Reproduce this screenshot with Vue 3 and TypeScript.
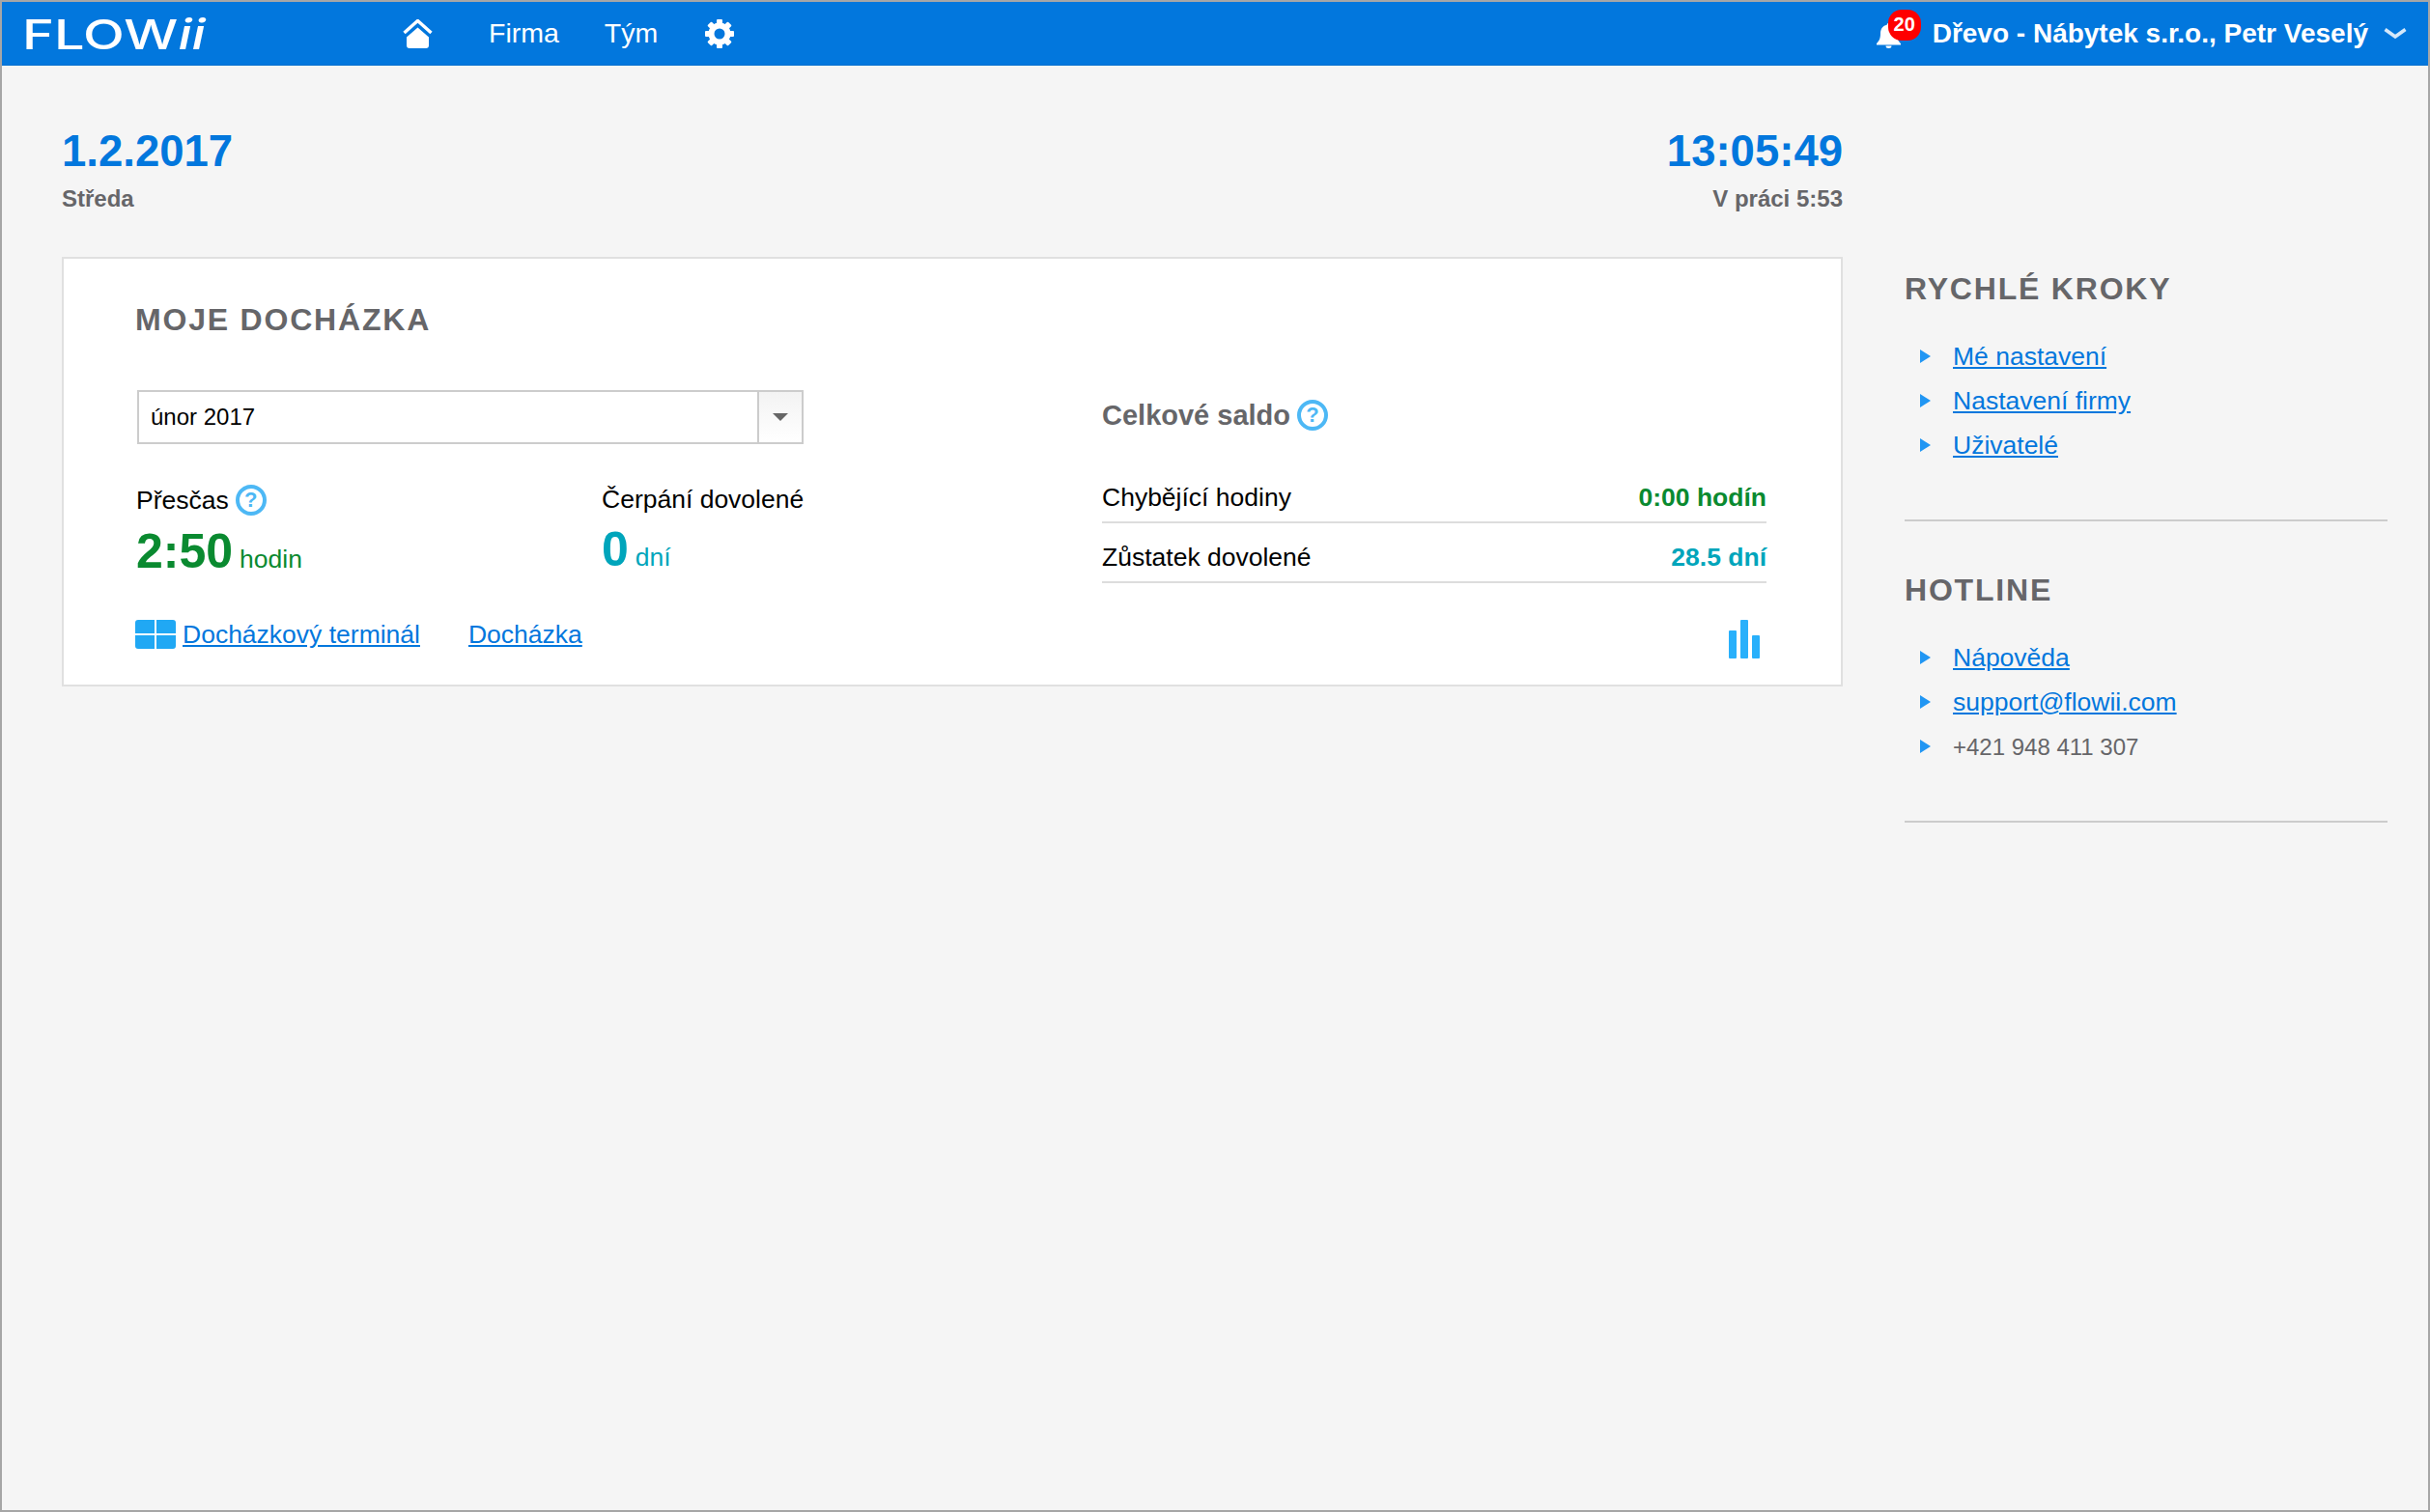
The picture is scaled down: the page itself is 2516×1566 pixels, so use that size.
<template>
  <div class="page">
    <header class="topbar">
      <div class="logo">FLOW<em>ii</em></div>
      <nav class="nav">
        <svg class="home-icon" viewBox="0 0 31 30" aria-label="Domů">
          <path d="M1.5 14 15.5 1.5 29.5 14" fill="none" stroke="#fff" stroke-width="3.4" />
          <path d="M15.5 8.5 27 18.5V27a3 3 0 0 1-3 3H7a3 3 0 0 1-3-3v-8.500z" fill="#fff" />
        </svg>
        <a class="nav-link">Firma</a>
        <a class="nav-link">Tým</a>
        <svg class="gear-icon" viewBox="-15 -15 30 30" aria-label="Nastavení">
          <circle r="8.500" fill="none" stroke="#fff" stroke-width="6" />
          <rect
            v-for="angle in gearTeeth"
            :key="angle"
            x="-3"
            y="-15"
            width="6"
            height="6"
            rx="1"
            fill="#fff"
            :transform="`rotate(${angle})`"
          />
        </svg>
      </nav>
      <div class="user">
        <div class="bell">
          <svg viewBox="0 0 25 26">
            <path d="M12.500 0c1 0 1.700.7 1.800 1.700C18.600 2.500 21 6 21 10.500c0 5 1 7.500 4 10.500v1.500H0V21c3-3 4-5.500 4-10.500C4 6 6.400 2.500 10.700 1.700 10.800.7 11.500 0 12.500 0zM9.500 23.500h6a3 2.500 0 0 1-6 0z" fill="#fff" />
          </svg>
          <span class="badge">20</span>
        </div>
        <span class="user-name">Dřevo - Nábytek s.r.o., Petr Veselý</span>
        <svg class="user-arrow" viewBox="0 0 24 11">
          <path d="M1.500 1.500 12 9 22.500 1.500" fill="none" stroke="#d5e8fa" stroke-width="3.600" />
        </svg>
      </div>
    </header>

    <main class="main">
      <div class="content">
        <div class="date-row">
          <div>
            <div class="big-date">1.2.2017</div>
            <div class="sub-date">Středa</div>
          </div>
          <div class="date-right">
            <div class="big-date">13:05:49</div>
            <div class="sub-date">V práci 5:53</div>
          </div>
        </div>

        <section class="card">
          <h2 class="section-title">MOJE DOCHÁZKA</h2>
          <div class="card-grid">
            <div>
              <div class="month-select">
                <span class="month-value">únor 2017</span>
                <span class="month-btn"><i class="month-caret" /></span>
              </div>
              <div class="stats">
                <div>
                  <div class="stat-label">Přesčas <span class="help">?</span></div>
                  <div class="stat-value green"><b>2:50</b> <span>hodin</span></div>
                </div>
                <div>
                  <div class="stat-label">Čerpání dovolené</div>
                  <div class="stat-value teal"><b>0</b> <span>dní</span></div>
                </div>
              </div>
            </div>
            <div class="saldo">
              <div class="saldo-title">Celkové saldo <span class="help">?</span></div>
              <div class="saldo-rows">
                <div class="saldo-row">
                  <span>Chybějící hodiny</span>
                  <b class="green">0:00 hodín</b>
                </div>
                <div class="saldo-row">
                  <span>Zůstatek dovolené</span>
                  <b class="teal">28.5 dní</b>
                </div>
              </div>
            </div>
          </div>
          <div class="card-footer">
            <svg class="win-icon" viewBox="0 0 42 30">
              <path d="M3 0h17v14H0V3a3 3 0 0 1 3-3zM22 0h17a3 3 0 0 1 3 3v11H22zM0 16h20v14H3a3 3 0 0 1-3-3zM22 16h20v11a3 3 0 0 1-3 3H22z" fill="#20a8f4" />
            </svg>
            <a class="link terminal-link">Docházkový terminál</a>
            <a class="link">Docházka</a>
            <svg class="chart-icon" viewBox="0 0 32 40">
              <rect x="0" y="11" width="8" height="29" rx="1" />
              <rect x="12" y="0" width="8" height="40" rx="1" />
              <rect x="24" y="16" width="8" height="24" rx="1" />
            </svg>
          </div>
        </section>
      </div>

      <aside class="side">
        <div v-for="block in sideBlocks" :key="block.title" class="side-block">
          <h3 class="section-title">{{ block.title }}</h3>
          <ul class="side-list">
            <li v-for="item in block.items" :key="item.text">
              <a v-if="item.link" class="link">{{ item.text }}</a>
              <span v-else class="phone">{{ item.text }}</span>
            </li>
          </ul>
        </div>
      </aside>
    </main>
  </div>
</template>

<script setup lang="ts">
interface SideItem {
  text: string;
  link: boolean;
}

const gearTeeth: number[] = [0, 45, 90, 135, 180, 225, 270, 315];

const sideBlocks: { title: string; items: SideItem[] }[] = [
  {
    title: 'RYCHLÉ KROKY',
    items: [
      { text: 'Mé nastavení', link: true },
      { text: 'Nastavení firmy', link: true },
      { text: 'Uživatelé', link: true },
    ],
  },
  {
    title: 'HOTLINE',
    items: [
      { text: 'Nápověda', link: true },
      { text: 'support@flowii.com', link: true },
      { text: '+421 948 411 307', link: false },
    ],
  },
];
</script>

<style>
html,
body {
  margin: 0;
  background: #f5f5f5;
}
</style>

<style scoped>
.page {
  box-sizing: border-box;
  height: 1566px;
  border: 2px solid #a6a6a6;
  background: #f5f5f5;
  font-family: "Liberation Sans", Arial, sans-serif;
  font-size: 26.5px;
  color: #000;
  overflow: hidden;
}

.topbar {
  box-sizing: border-box;
  height: 66px;
  display: flex;
  align-items: center;
  padding: 0 22px;
  background: #0277dd;
  border-bottom: 1px solid #036fce;
  color: #fff;
}

.logo {
  width: 394px;
  margin-left: -1px;
  font-family: Inter, sans-serif;
  font-size: 43px;
  font-weight: 500;
  line-height: 46px;
  transform: scaleX(1.3);
  transform-origin: left center;
  white-space: nowrap;
}

.nav {
  display: flex;
  align-items: center;
  gap: 47px;
}

.home-icon {
  width: 31px;
  height: 30px;
  margin-right: 11px;
}

.nav-link {
  font-size: 28.5px;
}

.gear-icon {
  width: 30px;
  height: 30px;
  margin-left: 2px;
}

.user {
  margin-left: auto;
  display: flex;
  align-items: center;
}

.bell {
  position: relative;
  width: 25px;
  height: 26px;
  margin-right: 33px;
  top: 2px;
}

.bell svg {
  display: block;
  width: 25px;
  height: 26px;
}

.badge {
  position: absolute;
  left: 12px;
  top: -14px;
  width: 34px;
  height: 32px;
  border-radius: 14px;
  background: #f00;
  font-size: 20px;
  font-weight: 700;
  line-height: 30px;
  text-align: center;
}

.user-name {
  font-size: 28px;
  font-weight: 700;
  white-space: nowrap;
}

.user-arrow {
  width: 24px;
  height: 11px;
  margin-left: 16px;
}

.main {
  display: flex;
  gap: 64px;
  padding: 63px 42px 0 62px;
}

.content {
  width: 1844px;
  flex-shrink: 0;
}

.date-row {
  display: flex;
  justify-content: space-between;
}

.date-right {
  text-align: right;
}

.big-date {
  font-size: 45.5px;
  font-weight: 700;
  line-height: 52px;
  color: #0277dd;
}

.sub-date {
  margin-top: 8px;
  font-size: 24px;
  font-weight: 700;
  line-height: 30px;
  color: #666669;
}

.card {
  margin-top: 45px;
  padding: 43px 77px 27px 74px;
  background: #fff;
  border: 2px solid #e0e0e0;
}

.section-title {
  margin: 0;
  font-size: 32px;
  font-weight: 700;
  line-height: 40px;
  letter-spacing: 1.8px;
  color: #666669;
}

.card-grid {
  display: grid;
  grid-template-columns: 692px 1fr;
  column-gap: 309px;
  margin-top: 53px;
}

.month-select {
  box-sizing: border-box;
  height: 56px;
  margin-left: 2px;
  display: flex;
  align-items: center;
  border: 2px solid #ccc;
  background: #fff;
  font-size: 24px;
}

.month-value {
  flex: 1;
  padding-left: 12px;
}

.month-btn {
  box-sizing: border-box;
  width: 46px;
  height: 100%;
  display: flex;
  align-items: center;
  justify-content: center;
  border-left: 2px solid #ccc;
  background: linear-gradient(#f3f3f3, #fff);
}

.month-caret {
  width: 0;
  height: 0;
  border-left: 8px solid transparent;
  border-right: 8px solid transparent;
  border-top: 8px solid #666;
}

.stats {
  display: grid;
  grid-template-columns: 482px 1fr;
  margin-top: 42px;
  margin-left: 1px;
}

.stat-label {
  display: flex;
  align-items: center;
  gap: 7px;
  line-height: 30px;
  white-space: nowrap;
}

.help {
  box-sizing: border-box;
  flex-shrink: 0;
  width: 32px;
  height: 32px;
  border: 4px solid #4db8f5;
  border-radius: 50%;
  font-size: 22px;
  font-weight: 700;
  line-height: 24px;
  text-align: center;
  color: #4db8f5;
}

.stat-value {
  display: flex;
  align-items: baseline;
  gap: 7px;
  height: 56px;
  margin-top: 9px;
  line-height: 56px;
}

.stat-value b {
  font-size: 50px;
}

.green {
  color: #0a8a30;
}

.teal {
  color: #00a5bb;
}

.saldo {
  padding-top: 10px;
}

.saldo-title {
  display: flex;
  align-items: center;
  gap: 7px;
  font-size: 29px;
  font-weight: 700;
  line-height: 32px;
  color: #666669;
}

.saldo-rows {
  margin-top: 34px;
}

.saldo-row {
  display: flex;
  justify-content: space-between;
  padding: 20px 0 10px;
  border-bottom: 2px solid #ddd;
  line-height: 30px;
}

.card-footer {
  display: flex;
  align-items: flex-start;
  margin-top: 38px;
}

.win-icon {
  width: 42px;
  height: 30px;
  margin-right: 7px;
}

.link {
  color: #0277dd;
  line-height: 30px;
  text-decoration: underline;
}

.terminal-link {
  margin-right: 50px;
}

.chart-icon {
  width: 32px;
  height: 40px;
  margin-left: auto;
  margin-right: 7px;
  fill: #29b0fb;
}

.side {
  width: 500px;
  padding-top: 148px;
}

.side-block {
  padding-bottom: 54px;
  margin-bottom: 51px;
  border-bottom: 2px solid #ccc;
}

.side-list {
  margin: 27px 0 0;
  padding: 0 0 0 50px;
  list-style: none;
}

.side-list li {
  position: relative;
  height: 46px;
  line-height: 46px;
}

.side-list li::before {
  content: "";
  position: absolute;
  left: -34px;
  top: 16px;
  border-left: 11px solid #2196f3;
  border-top: 7px solid transparent;
  border-bottom: 7px solid transparent;
}

.phone {
  color: #666669;
  font-size: 24px;
}
</style>
